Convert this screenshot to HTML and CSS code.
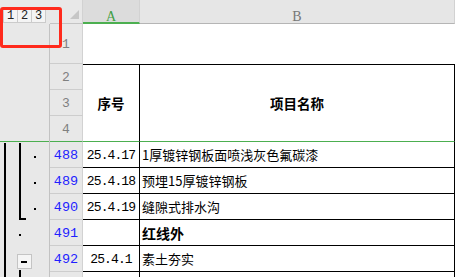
FILE: index.html
```html
<!DOCTYPE html>
<html lang="zh-CN">
<head>
  <meta charset="UTF-8">
  <title>工程量清单</title>
  <link rel="stylesheet" href="styles.css">
</head>
<body>
  <div class="sheet">
    <!-- cabecera de columnas -->
    <div class="levels">
      <span class="level-btn">1</span>
      <span class="level-btn">2</span>
      <span class="level-btn">3</span>
    </div>
    <div class="corner"><i class="corner-tri"></i></div>
    <div class="colhead active">A</div>
    <div class="colhead">B</div>
    <div class="edge"></div>

    <!-- zona de esquema (agrupaciones) -->
    <div class="outline">
      <svg width="49" height="253" viewBox="0 0 49 253">
        <rect x="0" y="117" width="49" height="1" fill="#4caf50"/>
        <rect x="4" y="119" width="2" height="134" fill="#000"/>
        <rect x="19" y="119" width="2" height="77" fill="#000"/>
        <rect x="19" y="194" width="7" height="2" fill="#000"/>
        <rect x="34" y="132" width="2" height="2" fill="#000"/>
        <rect x="34" y="158" width="2" height="2" fill="#000"/>
        <rect x="34" y="184" width="2" height="2" fill="#000"/>
        <rect x="19" y="210" width="2" height="2" fill="#000"/>
        <rect x="17.5" y="230.5" width="14" height="14" fill="#f5f5f5" stroke="#c4c4c4"/>
        <rect x="21" y="237" width="6" height="2" fill="#000"/>
        <rect x="19" y="246" width="2" height="7" fill="#000"/>
      </svg>
    </div>

    <!-- fila 1 -->
    <div class="rowhead">1</div>
    <div class="cell blank"></div>
    <div class="cell blank"></div>
    <div class="edge"></div>

    <!-- filas 2-4: encabezado de tabla -->
    <div class="rowhead r2">2</div>
    <div class="rowhead r3">3</div>
    <div class="rowhead r4 frozen">4</div>
    <div class="cell head col-a">序号</div>
    <div class="cell head col-b">项目名称</div>

    <!-- datos -->
    <div class="rowhead num">488</div>
    <div class="cell code">25.4.17</div>
    <div class="cell name">1厚镀锌钢板面喷浅灰色氟碳漆</div>
    <div class="edge"></div>

    <div class="rowhead num">489</div>
    <div class="cell code">25.4.18</div>
    <div class="cell name">预埋15厚镀锌钢板</div>
    <div class="edge"></div>

    <div class="rowhead num">490</div>
    <div class="cell code">25.4.19</div>
    <div class="cell name">缝隙式排水沟</div>
    <div class="edge"></div>

    <div class="rowhead num">491</div>
    <div class="cell code"></div>
    <div class="cell name bold">红线外</div>
    <div class="edge"></div>

    <div class="rowhead num">492</div>
    <div class="cell code">25.4.1</div>
    <div class="cell name">素土夯实</div>
    <div class="edge"></div>

    <!-- fila cortada por el borde inferior -->
    <div class="rowhead num cut"></div>
    <div class="cell code cut"></div>
    <div class="cell name cut"></div>
    <div class="edge"></div>
  </div>

  <!-- marca roja de anotación -->
  <div class="mark"></div>
</body>
</html>
```

FILE: styles.css
```css
* {
  margin: 0;
  padding: 0;
  box-sizing: border-box;
}
body {
  width: 456px;
  height: 277px;
  overflow: hidden;
  background: #fff;
  position: relative;
  font-family: "Noto Sans CJK SC", sans-serif;
}
.sheet {
  display: grid;
  grid-template-columns: 50px 33px 57px 315px 1px;
  grid-template-rows: 24px 40px repeat(3, 26px) repeat(5, 26px) 5px;
}
/* cabecera */
.levels {
  background: #e8e8e8;
  display: flex;
  align-items: flex-start;
  padding: 9px 0 0 3px;
}
.level-btn {
  width: 15px;
  height: 14px;
  margin-right: -1px;
  background: #f4f4f4;
  border: 1px solid #cbcbcb;
  font: 12px/12px "Liberation Mono", monospace;
  color: #222;
  text-align: center;
}
.corner {
  background: #e8e8e8;
  border-bottom: 1px solid #c4c4c4;
  border-right: 1px solid #d2d2d2;
  display: flex;
  justify-content: flex-end;
  align-items: flex-end;
  padding: 0 3px 4px 0;
}
.corner-tri {
  display: block;
  width: 9px;
  height: 9px;
  background: #c6c6c6;
  clip-path: polygon(100% 0, 100% 100%, 0 100%);
}
.colhead {
  background: #e6e6e6;
  border-bottom: 1px solid #b5b5b5;
  border-right: 1px solid #d2d2d2;
  font: 14px/1 "Liberation Serif", serif;
  color: #777;
  text-align: center;
  padding-top: 10px;
}
.colhead.active {
  background: #dcdcdc;
  color: #3f9f45;
  border-bottom: 2px solid #4caf50;
}
.edge {
  background: #fff;
}
/* esquema */
.outline {
  grid-column: 1;
  grid-row: 2 / -1;
  background: #e8e8e8;
  border-right: 1px solid #c2c2c2;
}
.outline svg {
  display: block;
}
/* cabecera de filas */
.rowhead {
  grid-column: 2;
  background: #e8e8e8;
  border-bottom: 1px solid #cdcdcd;
  border-right: 1px solid #d2d2d2;
  font: 13px/1 "Liberation Mono", monospace;
  color: #808080;
  display: flex;
  align-items: center;
  justify-content: center;
  padding-top: 2px;
}
.rowhead.r2 { grid-row: 3; }
.rowhead.r3 { grid-row: 4; }
.rowhead.r4 { grid-row: 5; }
.rowhead.frozen {
  border-bottom-color: #4caf50;
}
.rowhead.num {
  color: #1f1fff;
  font-size: 13.5px;
}
/* celdas */
.cell {
  display: flex;
  align-items: center;
  font-size: 13px;
  color: #000;
}
.cell.head {
  grid-row: 3 / 6;
  border-top: 1px solid #000;
  border-right: 1px solid #000;
  border-bottom: 1px solid #4caf50;
  justify-content: center;
  font-weight: bold;
  font-size: 13.5px;
}
.cell.col-a { grid-column: 3; }
.cell.col-b { grid-column: 4; }
.cell.code,
.cell.name {
  border-bottom: 1px solid #000;
  border-right: 1px solid #000;
}
.cell.code {
  justify-content: center;
  font: 13px "Liberation Mono", monospace;
  letter-spacing: -0.9px;
  padding-top: 1px;
}
.cell.name {
  padding-left: 2px;
}
.cell.bold {
  font-weight: bold;
  font-size: 14px;
}
.rowhead.cut,
.cell.cut {
  border-bottom: none;
  padding: 0;
}
/* anotación roja */
.mark {
  position: absolute;
  left: 0;
  top: 7px;
  width: 62px;
  height: 41px;
  border: 3px solid #ff2a1c;
  border-radius: 3px;
}
```
